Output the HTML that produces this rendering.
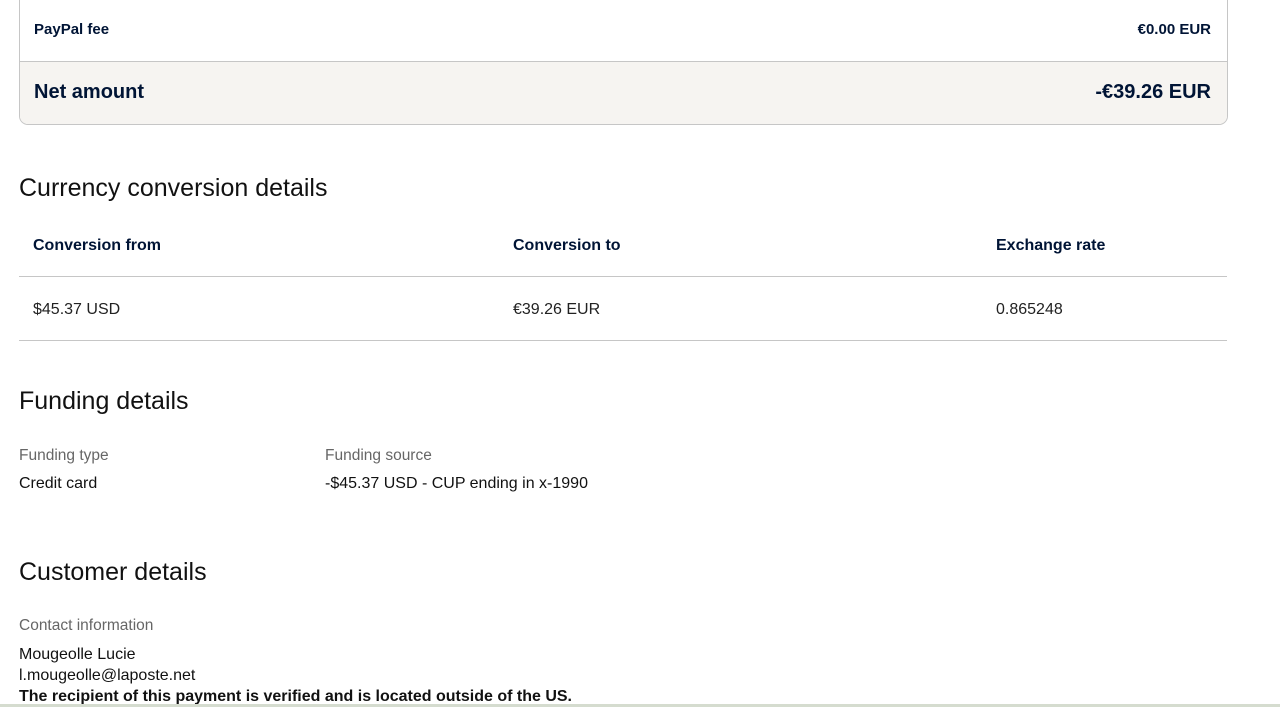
<!DOCTYPE html>
<html><head><style>
body{margin:0;width:1280px;height:707px;overflow:hidden;background:#fff;font-family:"Liberation Sans",Arial,sans-serif;color:#001435;position:relative}
.a{position:absolute;white-space:nowrap}
.box{position:absolute;left:19px;top:-10px;width:1207px;height:133px;border:1px solid #c6c6c6;border-radius:0 0 9px 9px;overflow:hidden}
.net{position:absolute;left:0;top:70px;width:100%;height:63px;background:#f6f4f1;border-top:1px solid #c6c6c6}
h2{position:absolute;margin:0;font-weight:normal;font-size:25px;color:#111}
.hr{position:absolute;left:19px;width:1208px;height:1px;background:#c6c6c6}
.b{font-weight:bold;font-size:16px}
.r{font-size:16px;color:#222}
.g{font-size:15.5px;color:#666}
</style></head><body>
<div class="box"><div class="net"></div></div>
<div class="a b" style="left:34px;top:21px;font-size:15px">PayPal fee</div>
<div class="a b" style="right:69px;top:21px;font-size:15px">€0.00 EUR</div>
<div class="a b" style="left:34px;top:81px;font-size:20px">Net amount</div>
<div class="a b" style="right:69px;top:81px;font-size:20px">-€39.26 EUR</div>
<h2 style="left:19px;top:174px">Currency conversion details</h2>
<div class="a b" style="left:33px;top:237px">Conversion from</div>
<div class="a b" style="left:513px;top:237px">Conversion to</div>
<div class="a b" style="left:996px;top:237px">Exchange rate</div>
<div class="hr" style="top:276px"></div>
<div class="a r" style="left:33px;top:301px">$45.37 USD</div>
<div class="a r" style="left:513px;top:301px">€39.26 EUR</div>
<div class="a r" style="left:996px;top:301px">0.865248</div>
<div class="hr" style="top:340px"></div>
<h2 style="left:19px;top:387px">Funding details</h2>
<div class="a g" style="left:19px;top:447px">Funding type</div>
<div class="a g" style="left:325px;top:447px">Funding source</div>
<div class="a r" style="left:19px;top:475px;color:#111">Credit card</div>
<div class="a r" style="left:325px;top:475px;color:#111">-$45.37 USD - CUP ending in x-1990</div>
<h2 style="left:19px;top:558px">Customer details</h2>
<div class="a g" style="left:19px;top:617px">Contact information</div>
<div class="a r" style="left:19px;top:646px;color:#111">Mougeolle Lucie</div>
<div class="a r" style="left:19px;top:667px;color:#111">l.mougeolle@laposte.net</div>
<div class="a" style="left:19px;top:688px;font-weight:bold;font-size:16px;color:#111">The recipient of this payment is verified and is located outside of the US.</div>
<div class="a" style="left:0;top:704px;width:1280px;height:3px;background:#d5dccf"></div>
</body></html>
